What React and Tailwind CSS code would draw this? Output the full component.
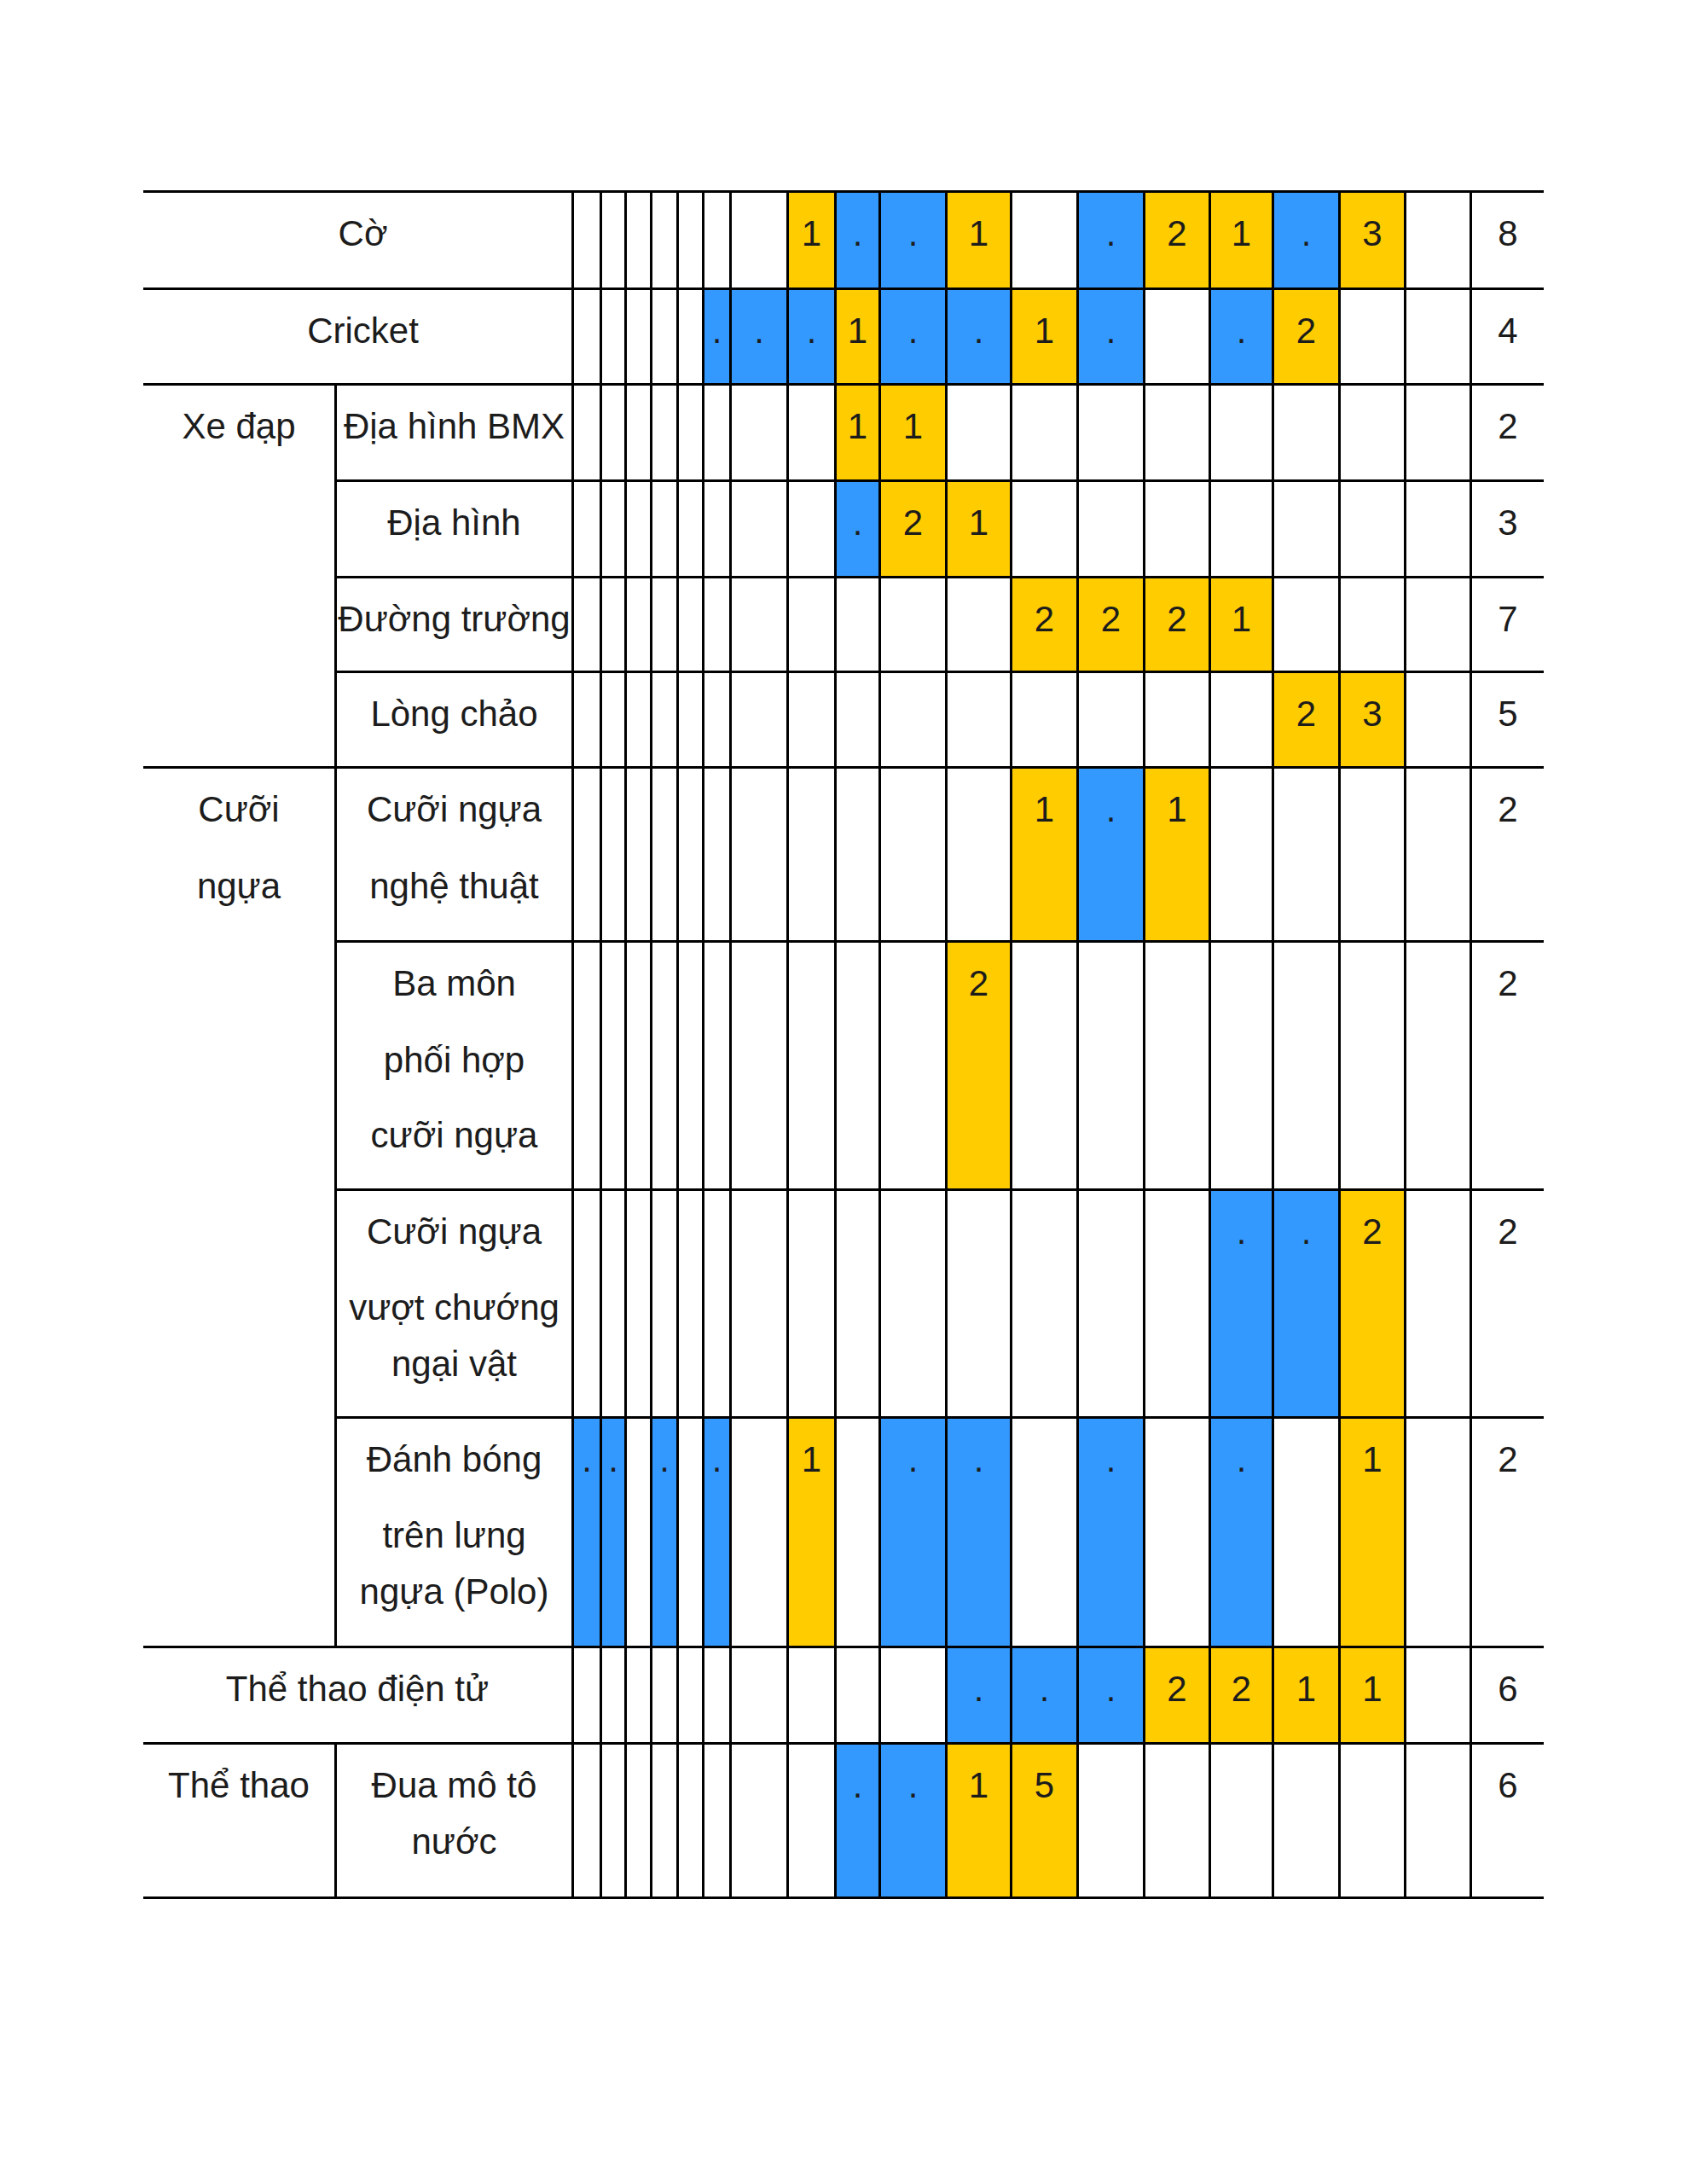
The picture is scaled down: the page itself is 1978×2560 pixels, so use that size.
import React from 'react';

const Y = 'y';
const B = 'b';

const GAP = {
  90: 'mt-[42px]',
  89: 'mt-[41px]',
  88: 'mt-[40px]',
  66: 'mt-[18px]',
};

function Lines({ lines, gaps = [] }) {
  return (
    <>
      {lines.map((l, i) => (
        <div key={i} className={`whitespace-nowrap ${i > 0 ? GAP[gaps[i - 1]] : ''}`}>
          {l}
        </div>
      ))}
    </>
  );
}

// data: map col index (1-based) -> [color, text]
const rows = [
  {
    label: { span2: true, lines: ['Cờ'], extra: 'pl-[13px]' },
    data: { 8: [Y, '1'], 9: [B, '.'], 10: [B, '.'], 11: [Y, '1'], 13: [B, '.'], 14: [Y, '2'], 15: [Y, '1'], 16: [B, '.'], 17: [Y, '3'] },
    total: '8',
  },
  {
    label: { span2: true, lines: ['Cricket'], extra: 'pl-[13px]' },
    data: { 6: [B, '.'], 7: [B, '.'], 8: [B, '.'], 9: [Y, '1'], 10: [B, '.'], 11: [B, '.'], 12: [Y, '1'], 13: [B, '.'], 15: [B, '.'], 16: [Y, '2'] },
    total: '4',
  },
  {
    group: { span: 4, lines: ['Xe đạp'] },
    sub: { lines: ['Địa hình BMX'] },
    data: { 9: [Y, '1'], 10: [Y, '1'] },
    total: '2',
  },
  {
    sub: { lines: ['Địa hình'] },
    data: { 9: [B, '.'], 10: [Y, '2'], 11: [Y, '1'] },
    total: '3',
  },
  {
    sub: { lines: ['Đường trường'] },
    data: { 12: [Y, '2'], 13: [Y, '2'], 14: [Y, '2'], 15: [Y, '1'] },
    total: '7',
  },
  {
    sub: { lines: ['Lòng chảo'] },
    data: { 16: [Y, '2'], 17: [Y, '3'] },
    total: '5',
  },
  {
    group: { span: 4, lines: ['Cưỡi', 'ngựa'], gaps: [90] },
    sub: { lines: ['Cưỡi ngựa', 'nghệ thuật'], gaps: [90] },
    data: { 12: [Y, '1'], 13: [B, '.'], 14: [Y, '1'] },
    total: '2',
  },
  {
    sub: { lines: ['Ba môn', 'phối hợp', 'cưỡi ngựa'], gaps: [90, 88] },
    data: { 11: [Y, '2'] },
    total: '2',
  },
  {
    sub: { lines: ['Cưỡi ngựa', 'vượt chướng', 'ngại vật'], gaps: [89, 66] },
    data: { 15: [B, '.'], 16: [B, '.'], 17: [Y, '2'] },
    total: '2',
  },
  {
    sub: { lines: ['Đánh bóng', 'trên lưng', 'ngựa (Polo)'], gaps: [89, 66] },
    data: { 1: [B, '.'], 2: [B, '.'], 4: [B, '.'], 6: [B, '.'], 8: [Y, '1'], 10: [B, '.'], 11: [B, '.'], 13: [B, '.'], 15: [B, '.'], 17: [Y, '1'] },
    total: '2',
  },
  {
    label: { span2: true, lines: ['Thể thao điện tử'] },
    data: { 11: [B, '.'], 12: [B, '.'], 13: [B, '.'], 14: [Y, '2'], 15: [Y, '2'], 16: [Y, '1'], 17: [Y, '1'] },
    total: '6',
  },
  {
    group: { span: 1, lines: ['Thể thao'] },
    sub: { lines: ['Đua mô tô', 'nước'], gaps: [66] },
    data: { 9: [B, '.'], 10: [B, '.'], 11: [Y, '1'], 12: [Y, '5'] },
    total: '6',
  },
];

const cellBase = 'border-t-[3px] border-black pt-[24px] text-center leading-[48px]';

export default function App() {
  const cells = [];
  rows.forEach((r, ri) => {
    if (r.label) {
      cells.push(
        <div key={`l${ri}`} className={`col-span-2 ${r.label.extra || ''} ${cellBase}`}>
          <Lines lines={r.label.lines} gaps={r.label.gaps} />
        </div>
      );
    }
    if (r.group) {
      cells.push(
        <div key={`g${ri}`} className={`${r.group.span === 4 ? 'row-span-4' : ''} ${cellBase}`}>
          <Lines lines={r.group.lines} gaps={r.group.gaps} />
        </div>
      );
    }
    if (r.sub) {
      cells.push(
        <div key={`s${ri}`} className={`border-l-[3px] ${cellBase}`}>
          <Lines lines={r.sub.lines} gaps={r.sub.gaps} />
        </div>
      );
    }
    for (let c = 1; c <= 18; c++) {
      const d = r.data[c];
      const bg = d ? (d[0] === Y ? 'bg-[#ffcc00]' : 'bg-[#3399ff]') : 'bg-white';
      cells.push(
        <div key={`d${ri}-${c}`} className={`border-l-[3px] ${bg} ${cellBase}`}>
          {d ? d[1] : ''}
        </div>
      );
    }
    cells.push(
      <div key={`t${ri}`} className={`border-l-[3px] ${cellBase}`}>
        {r.total}
      </div>
    );
  });

  return (
    <div className="min-h-[2560px] w-[1978px] bg-white pl-[168px] pt-[223px] font-['Liberation_Sans',Arial,sans-serif] text-[42px] text-[#1c1c1c]">
      <div className="grid w-[1642px] grid-cols-[224px_278px_33px_29px_30px_31px_30px_32px_67px_56px_52px_78px_76px_78px_78px_77px_74px_78px_77px_77px_87px] grid-rows-[114px_112px_113px_113px_111px_112px_204px_291px_267px_269px_113px_181px] border-b-[3px] border-black">
        {cells}
      </div>
    </div>
  );
}
